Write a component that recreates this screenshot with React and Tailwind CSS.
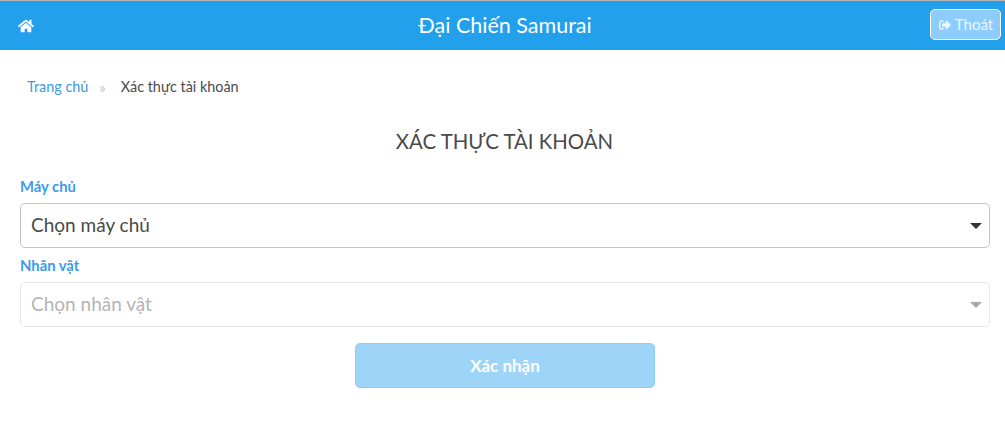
import { FaHome, FaSignOutAlt } from 'react-icons/fa';

export default function App() {
  return (
    <div className="min-h-[441px] bg-white font-['Lato','Noto_Sans',sans-serif] text-[#4a4a4a]">
      {/* Header */}
      <div className="border-t border-[#b4b4b4] bg-[#22a0ec] h-[50px] flex items-center justify-between pl-[18px] pr-[4px]">
        <FaHome className="text-white" size={16} />
        <div className="text-white text-[21.5px] ml-[46px]">Đại Chiến Samurai</div>
        <button className="h-[31px] w-[71px] mt-[-2px] flex items-center justify-center gap-[4px] pl-[1px] rounded-[5px] border border-white bg-[#8ccdfd] text-[#eaf6ff] text-[15px]">
          <FaSignOutAlt size={12} />
          <span>Thoát</span>
        </button>
      </div>

      {/* Breadcrumb */}
      <div className="flex items-center pl-[27px] pt-[28px] text-[14.4px] leading-[18px]">
        <span className="text-[#3d9be0]">Trang chủ</span>
        <span className="ml-[11px] mr-[15px] text-[#c4c4c4] text-[15px]">»</span>
        <span>Xác thực tài khoản</span>
      </div>

      <h2 className="text-center pl-[4px] text-[20.4px] leading-[26px] mt-[32px]">XÁC THỰC TÀI KHOẢN</h2>

      {/* Form */}
      <div className="pl-[20px] pr-[15px] mt-[23px]">
        <label className="block text-[14.8px] leading-[18px] font-bold text-[#3d9bec]">Máy chủ</label>
        <div className="mt-[8px] h-[45px] flex items-center justify-between rounded-[5px] border border-[#c4c4c4] pl-[10px] pr-[7px] text-[19px]">
          <span>Chọn máy chủ</span>
          <span className="border-x-[6px] border-t-[6px] border-x-transparent border-t-[#333333]"></span>
        </div>
        <label className="block mt-[8px] text-[14.8px] leading-[18px] font-bold text-[#3d9bec]">Nhân vật</label>
        <div className="mt-[8px] h-[45px] flex items-center justify-between rounded-[5px] border border-[#e8e8e8] pl-[10px] pr-[7px] text-[19px] text-[#b4b4b4]">
          <span>Chọn nhân vật</span>
          <span className="border-x-[6px] border-t-[6px] border-x-transparent border-t-[#aaaaaa]"></span>
        </div>
        <div className="flex justify-center mt-[16px]">
          <button className="w-[300px] h-[45px] rounded-[5px] border border-[#8fcbf2] bg-[#9dd4f7] text-white text-[17px] font-bold">Xác nhận</button>
        </div>
      </div>
    </div>
  );
}
